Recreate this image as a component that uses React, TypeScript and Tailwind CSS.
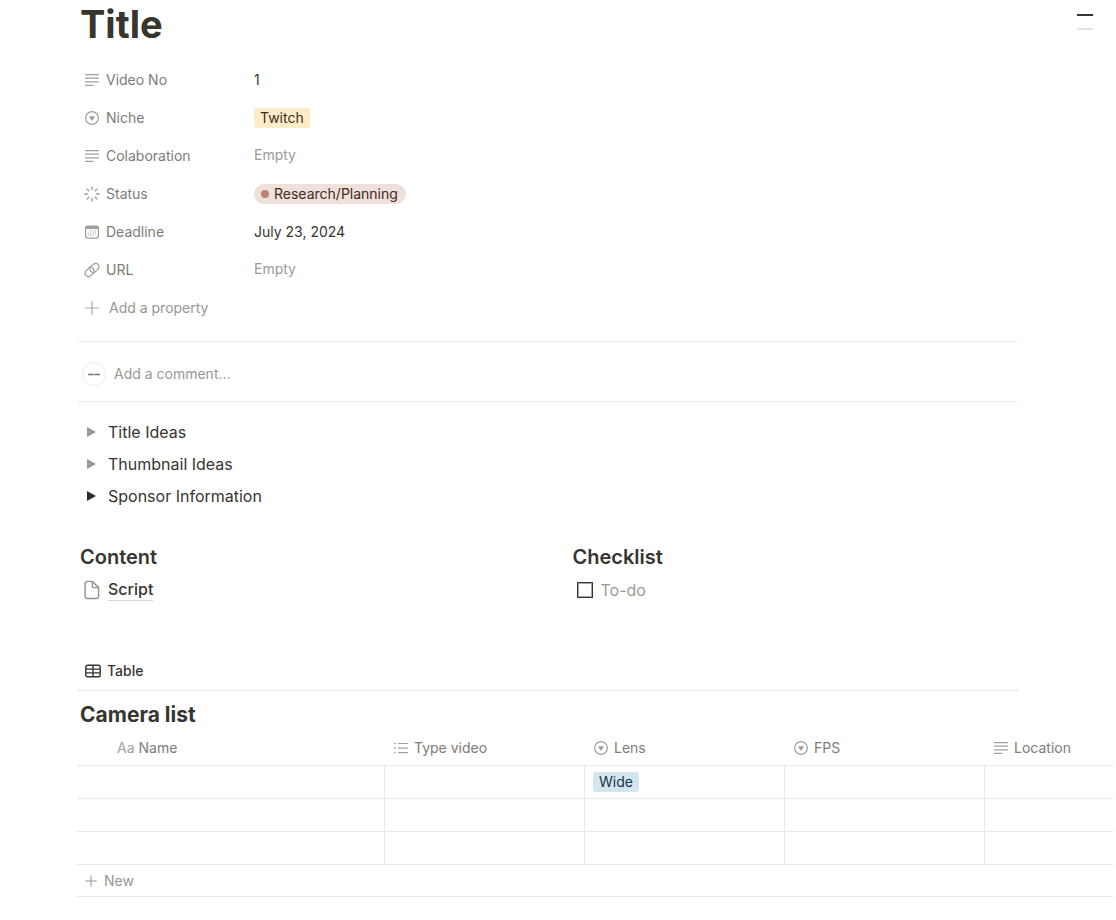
/**
 * Video planner page: properties, comment box, toggles,
 * content / checklist columns and the camera list table.
 */
import React from 'react';

type IconProps = { className?: string };

const TextIcon: React.FC<IconProps> = ({ className = '' }) => (
  <svg viewBox="0 0 14 14" className={`w-3.5 h-3.5 shrink-0 ${className}`} fill="currentColor" aria-hidden="true">
    <rect x="0" y="1" width="14" height="1.2" rx=".5" />
    <rect x="0" y="4.6" width="14" height="1.2" rx=".5" />
    <rect x="0" y="8.2" width="14" height="1.2" rx=".5" />
    <rect x="0" y="11.8" width="8.5" height="1.2" rx=".5" />
  </svg>
);

const SelectIcon: React.FC<IconProps> = ({ className = '' }) => (
  <svg viewBox="0 0 14 14" className={`w-3.5 h-3.5 shrink-0 ${className}`} aria-hidden="true">
    <circle cx="7" cy="7" r="6.4" fill="none" stroke="currentColor" strokeWidth="1.2" />
    <path d="M4.7 5.2h4.6c.4 0 .6.4.4.7L7.4 9.4a.5.5 0 0 1-.8 0L4.3 5.9c-.2-.3 0-.7.4-.7z" fill="currentColor" />
  </svg>
);

const StatusIcon: React.FC<IconProps> = ({ className = '' }) => (
  <svg viewBox="0 0 16 16" className={`w-4 h-4 -mx-px shrink-0 ${className}`} fill="none" stroke="currentColor" strokeWidth="1.4" strokeLinecap="round" aria-hidden="true">
    <path d="M8 .9v2.6M8 12.5v2.6M.9 8h2.6M12.5 8h2.6M3 3l1.8 1.8M11.2 11.2 13 13M3 13l1.8-1.8M11.2 4.8 13 3" />
  </svg>
);

const DateIcon: React.FC<IconProps> = ({ className = '' }) => (
  <svg viewBox="0 0 14 14" className={`w-3.5 h-3.5 shrink-0 ${className}`} aria-hidden="true">
    <rect x=".6" y="1.1" width="12.8" height="12" rx="1.8" fill="none" stroke="currentColor" strokeWidth="1.3" />
    <path d="M.6 3.9V3A1.9 1.9 0 0 1 2.5 1.1h9A1.9 1.9 0 0 1 13.4 3v.9z" fill="currentColor" />
    <g fill="currentColor" opacity=".8">
      <rect x="5" y="5.3" width="1.2" height="1.2" />
      <rect x="7.4" y="5.3" width="1.2" height="1.2" />
      <rect x="9.8" y="5.3" width="1.2" height="1.2" />
      <rect x="2.8" y="7.5" width="1.2" height="1.2" />
      <rect x="5" y="7.5" width="1.2" height="1.2" />
      <rect x="7.4" y="7.5" width="1.2" height="1.2" />
      <rect x="9.8" y="7.5" width="1.2" height="1.2" />
      <rect x="2.8" y="9.7" width="1.2" height="1.2" />
      <rect x="5" y="9.7" width="1.2" height="1.2" />
      <rect x="7.4" y="9.7" width="1.2" height="1.2" />
    </g>
  </svg>
);

const UrlIcon: React.FC<IconProps> = ({ className = '' }) => (
  <svg viewBox="0 0 16 16" className={`w-4 h-4 -mx-px shrink-0 ${className}`} fill="none" stroke="currentColor" strokeWidth="1.3" strokeLinecap="round" aria-hidden="true">
    <path d="M6.6 5.2c-.7.1-1.300.4-1.800.9L2 8.900a3.300 3.300 0 0 0 0 4.700 3.300 3.300 0 0 0 4.700 0l2.400-2.400a3.300 3.300 0 0 0-.9-5.300" />
    <path d="M9.400 10.800c.7-.1 1.300-.4 1.800-.9L14 7.100a3.300 3.300 0 0 0 0-4.700 3.300 3.300 0 0 0-4.700 0L6.900 4.800a3.300 3.300 0 0 0 .9 5.300" />
  </svg>
);

const PlusIcon: React.FC<IconProps> = ({ className = '' }) => (
  <svg viewBox="0 0 14 14" className={`shrink-0 ${className}`} fill="none" stroke="currentColor" strokeWidth="1.2" strokeLinecap="round" aria-hidden="true">
    <path d="M7 .8v12.4M.8 7h12.4" />
  </svg>
);

const ListIcon: React.FC<IconProps> = ({ className = '' }) => (
  <svg viewBox="0 0 14 14" className={`w-3.5 h-3.5 shrink-0 ${className}`} fill="currentColor" aria-hidden="true">
    <rect x="0" y="1.7" width="1.7" height="1.5" rx=".6" />
    <rect x="0" y="6.3" width="1.7" height="1.5" rx=".6" />
    <rect x="0" y="10.9" width="1.7" height="1.5" rx=".6" />
    <rect x="4" y="1.9" width="10" height="1.2" rx=".5" />
    <rect x="4" y="6.5" width="10" height="1.2" rx=".5" />
    <rect x="4" y="11.1" width="10" height="1.2" rx=".5" />
  </svg>
);

const PageIcon: React.FC<IconProps> = ({ className = '' }) => (
  <svg viewBox="0 0 16 20" className={`w-4 h-5 shrink-0 ${className}`} fill="none" stroke="currentColor" strokeWidth="1.4" strokeLinejoin="round" aria-hidden="true">
    <path d="M3.2 1.4h5.2l6.2 6.1v8.9a2.1 2.1 0 0 1-2.1 2.1H3.2a2.1 2.1 0 0 1-2.1-2.1V3.5a2.1 2.1 0 0 1 2.1-2.1z" />
    <path d="M8.3 1.6v4.6c0 .9.5 1.4 1.4 1.4h4.7" />
  </svg>
);

const TableIcon: React.FC<IconProps> = ({ className = '' }) => (
  <svg viewBox="0 0 16 14" className={`w-4 h-3.5 shrink-0 ${className}`} fill="none" stroke="currentColor" strokeWidth="1.4" aria-hidden="true">
    <rect x=".8" y="1.3" width="14.4" height="11.4" rx="1.8" />
    <path d="M.8 5.1h14.4M.8 8.9h14.4M8 1.3v11.4" />
  </svg>
);

const properties: { label: string; icon: React.FC<IconProps>; value: React.ReactNode }[] = [
  { label: 'Video No', icon: TextIcon, value: '1' },
  {
    label: 'Niche',
    icon: SelectIcon,
    value: <span className="h-5 px-1.5 rounded-[3px] bg-[#fdecc8] text-[#402c1b] leading-5">Twitch</span>,
  },
  { label: 'Colaboration', icon: TextIcon, value: null },
  {
    label: 'Status',
    icon: StatusIcon,
    value: (
      <span className="flex items-center gap-[5px] h-5 pl-[7px] pr-2 rounded-full bg-[#eee0da] text-[#442a1e]">
        <span className="w-2 h-2 rounded-full bg-[#bb846c]" />
        Research/Planning
      </span>
    ),
  },
  { label: 'Deadline', icon: DateIcon, value: 'July 23, 2024' },
  { label: 'URL', icon: UrlIcon, value: null },
];

const toggles = [
  { label: 'Title Ideas', filled: false },
  { label: 'Thumbnail Ideas', filled: false },
  { label: 'Sponsor Information', filled: true },
];

const columns: { label: string; icon?: React.FC<IconProps> }[] = [
  { label: 'Name' },
  { label: 'Type video', icon: ListIcon },
  { label: 'Lens', icon: SelectIcon },
  { label: 'FPS', icon: SelectIcon },
  { label: 'Location', icon: TextIcon },
];

const rows = [{ lens: 'Wide' }, { lens: '' }, { lens: '' }];

const Properties = () => (
  <section className="pl-[7px]">
    <dl>
      {properties.map(({ label, icon: Icon, value }) => (
        <div key={label} className="flex items-center h-[38px]">
          <dt className="flex items-center gap-[7px] w-[169px] text-[#7d7c78]">
            <Icon className="text-[#a09f9b]" />
            {label}
          </dt>
          <dd className="flex items-center">
            {value ?? <span className="pb-0.5 text-[#9b9a97]">Empty</span>}
          </dd>
        </div>
      ))}
    </dl>
    <button type="button" className="flex items-center gap-2.5 h-[38px] text-[#979692]">
      <PlusIcon className="w-3.5 h-3.5 text-[#a9a8a4]" />
      Add a property
    </button>
  </section>
);

const CommentBox = () => (
  <section className="flex items-center gap-2 h-[61px] mt-3.5 pl-1 pt-1 border-y border-[#ebebea]">
    {/* avatar with a tiny wordmark */}
    <svg viewBox="0 0 24 24" className="w-6 h-6 shrink-0" aria-hidden="true">
      <circle cx="12" cy="12" r="11.5" fill="#fff" stroke="#ececec" />
      <path d="M6 12.5h12" stroke="#b5b5b5" strokeWidth="2" />
      <path d="M6.500 12.500h4.500M13 12.500h4.500" stroke="#6f6f6f" />
    </svg>
    <input
      aria-label="Add a comment"
      placeholder="Add a comment…"
      className="flex-1 min-w-0 outline-none placeholder:text-[#999894]"
    />
  </section>
);

const CameraTable = () => (
  <section className="pl-[77px] pr-[3px]">
    <div className="mr-[94px] border-b border-[#e9e9e7] h-[38px] pb-px flex items-center">
      <button type="button" className="flex items-center gap-1.5 pl-2 font-medium">
        <TableIcon />
        Table
      </button>
    </div>
    <h2 className="pl-[3px] pt-2 text-[21px] leading-8 font-bold">Camera list</h2>
    <table className="w-full table-fixed border-separate border-spacing-0">
      <colgroup>
        <col className="w-[308px]" />
        <col className="w-[200px]" />
        <col className="w-[200px]" />
        <col className="w-[200px]" />
        <col />
      </colgroup>
      <thead>
        <tr>
          {columns.map(({ label, icon: Icon }) => (
            <th key={label} scope="col" className="h-[35px] p-0 border-b border-[#e9e9e7] font-normal text-[#7d7c78]">
              {Icon ? (
                <div className="flex items-center gap-1.5 pl-[9px]">
                  <Icon className="text-[#a09f9b]" />
                  {label}
                </div>
              ) : (
                <div className="flex items-center gap-1 pl-10">
                  <span className="text-[#a3a29e]">Aa</span>
                  {label}
                </div>
              )}
            </th>
          ))}
        </tr>
      </thead>
      <tbody>
        {rows.map((row, i) => (
          <tr key={i}>
            {columns.map(({ label }, c) => (
              <td
                key={label}
                className={`h-[33px] p-0 border-b border-[#e9e9e7] ${c < columns.length - 1 ? 'border-r' : ''}`}
              >
                {label === 'Lens' && row.lens && (
                  <div className="flex pl-2">
                    <span className="h-5 px-1.5 rounded-[3px] bg-[#d3e5ef] text-[#183347] leading-5">{row.lens}</span>
                  </div>
                )}
              </td>
            ))}
          </tr>
        ))}
      </tbody>
    </table>
    <button type="button" className="flex items-center gap-[7px] w-full h-8 pl-2 border-b border-[#e9e9e7] text-[#979692]">
      <PlusIcon className="w-3 h-3" />
      New
    </button>
  </section>
);

export default function App() {
  return (
    <main className="relative bg-white text-sm text-[#37352f] font-[Inter,'Liberation_Sans',sans-serif]">
      {/* outline markers, float over the page edge */}
      <nav aria-label="Outline" className="absolute top-3.5 right-[23px] flex flex-col gap-3">
        <span className="w-4 h-0.5 bg-[#37352f]" />
        <span className="w-4 h-0.5 bg-[#e1e1e0]" />
      </nav>

      <div className="pl-[78px] pr-[99px]">
        <h1 className="pl-0.5 mb-[13px] text-[38px] leading-[48px] font-bold">Title</h1>
        <Properties />
        <CommentBox />

        <section className="mt-3.5 text-base">
          {toggles.map(({ label, filled }) => (
            <button key={label} type="button" className="flex items-center gap-3 w-full h-8 pl-[9px] text-left">
              <svg
                viewBox="0 0 9 10"
                className={`w-[9px] h-2.5 shrink-0 ${filled ? 'text-[#2f2d28]' : 'text-[#9a9996]'}`}
                fill="currentColor"
                aria-hidden="true"
              >
                <path d="M0 0l9 5-9 5z" />
              </svg>
              {label}
            </button>
          ))}
        </section>

        <div className="grid grid-cols-2 gap-12 pl-0.5 mt-[29px] text-base">
          <section>
            <h2 className="text-xl leading-8 font-semibold">Content</h2>
            <a href="#script" className="flex items-center gap-2 h-[34px] pl-1 font-medium">
              <PageIcon className="text-[#91918e]" />
              <span className="mb-0.5 leading-[22px] border-b border-[#d7d7d5]">Script</span>
            </a>
          </section>
          <section>
            <h2 className="text-xl leading-8 font-semibold">Checklist</h2>
            <label className="flex items-center gap-2 h-[34px] pl-1 text-[#9b9a97]">
              <input
                type="checkbox"
                className="appearance-none w-4 h-4 border border-[#37352f] inset-ring inset-ring-[#a5a4a1] checked:bg-[#2383e2]"
              />
              To-do
            </label>
          </section>
        </div>
      </div>

      <div className="mt-[46px]">
        <CameraTable />
      </div>
    </main>
  );
}
